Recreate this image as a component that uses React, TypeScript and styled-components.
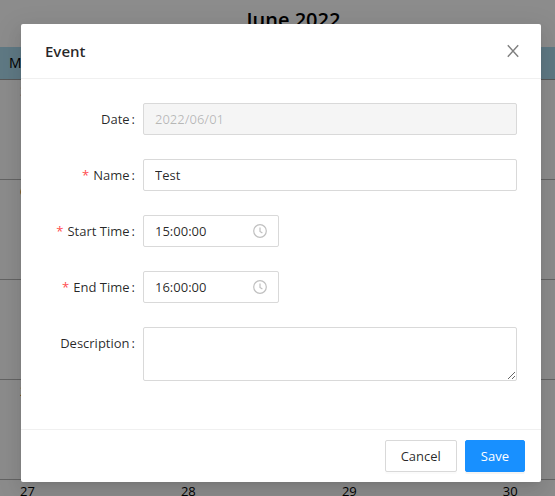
import React from 'react';
import styled, { createGlobalStyle } from 'styled-components';

const GlobalStyle = createGlobalStyle`
  *, *::before, *::after { box-sizing: border-box; }
  html, body, #root { height: 100%; }
  body {
    margin: 0;
    overflow: hidden;
    background: #fff;
    color: rgba(0, 0, 0, 0.85);
    font-family: "Open Sans", "Noto Sans", sans-serif;
    font-size: 13px;
    line-height: 22px;
  }
  button, input, textarea { font: inherit; color: inherit; }
`;

const Page = styled.div`
  position: relative;
  min-height: 100%;
`;

const Calendar = styled.main`
  position: absolute;
  inset: 0;
  overflow: hidden;
  color: #000;
`;

const MonthTitle = styled.h1`
  margin: 0;
  padding: 5px 0 12px 32px;
  font-size: 20px;
  line-height: 30px;
  font-weight: 600;
  text-align: center;
`;

const Week = styled.div`
  display: grid;
  grid-template-columns: repeat(4, 29%);
  height: 100px;
  border-bottom: 1px solid #b4b4b4;
`;

const WeekHeader = styled(Week)`
  height: 33px;
  align-items: center;
  background: #addcf0;
  border-bottom-color: #a0a0a0;
`;

const DayName = styled.div`
  padding-left: 9px;
  font-size: 14px;
`;

const Day = styled.div<{ $muted?: boolean }>`
  padding-left: 20px;
  font-size: 13px;
  color: ${(p) => (p.$muted ? '#a0a0a0' : '#000')};
`;

const Overlay = styled.div`
  position: absolute;
  inset: 0;
  padding: 24px 14px 14px 21px;
  background: rgba(0, 0, 0, 0.45);
`;

const Dialog = styled.section`
  max-width: 720px;
  margin: 0 auto;
  background: #fff;
  border-radius: 2px;
  box-shadow: 0 3px 6px -4px rgba(0, 0, 0, 0.12), 0 6px 16px 0 rgba(0, 0, 0, 0.08),
    0 9px 28px 8px rgba(0, 0, 0, 0.05);
`;

const DialogHeader = styled.header`
  display: flex;
  align-items: center;
  justify-content: space-between;
  padding: 16px 20px 16px 24px;
  border-bottom: 1px solid #f0f0f0;
`;

const DialogTitle = styled.h2`
  margin: 0;
  font-size: 15px;
  line-height: 22px;
  font-weight: 600;
`;

const CloseButton = styled.button`
  display: grid;
  place-items: center;
  width: 16px;
  height: 16px;
  padding: 0;
  border: 0;
  background: none;
  color: rgba(0, 0, 0, 0.5);
  cursor: pointer;
`;

const FormBody = styled.div`
  padding: 24px 24px 48px;
  display: grid;
  gap: 24px;
`;

const Field = styled.div`
  display: grid;
  grid-template-columns: 90px 1fr;
  column-gap: 8px;
  align-items: start;
`;

const Label = styled.label`
  text-align: right;
  white-space: nowrap;
  line-height: 32px;
  &::after {
    content: ":";
    margin-left: 2px;
  }
`;

const Required = styled.span`
  margin-right: 4px;
  color: #ff4d4f;
`;

const TextInput = styled.input`
  width: 100%;
  height: 32px;
  padding: 4px 11px;
  border: 1px solid #d9d9d9;
  border-radius: 2px;
  background: #fff;
  outline: none;
  &:disabled {
    background: #f5f5f5;
    color: rgba(0, 0, 0, 0.25);
  }
`;

const TimeBox = styled.div`
  display: flex;
  align-items: center;
  width: 136px;
  height: 32px;
  padding: 4px 11px;
  border: 1px solid #d9d9d9;
  border-radius: 2px;
  color: rgba(0, 0, 0, 0.25);
`;

const TimeInput = styled.input`
  flex: 1;
  min-width: 0;
  padding: 0;
  border: 0;
  outline: none;
  color: rgba(0, 0, 0, 0.85);
`;

const TextArea = styled.textarea`
  display: block;
  width: 100%;
  height: 54px;
  padding: 4px 11px;
  border: 1px solid #d9d9d9;
  border-radius: 2px;
  outline: none;
  resize: vertical;
`;

const DialogFooter = styled.footer`
  display: flex;
  justify-content: flex-end;
  gap: 8px;
  padding: 10px 16px;
  border-top: 1px solid #f0f0f0;
`;

const Button = styled.button<{ $primary?: boolean }>`
  height: 32px;
  padding: 0 15px;
  font-weight: ${(p) => (p.$primary ? 500 : 400)};
  border: 1px solid ${(p) => (p.$primary ? '#1890ff' : '#d9d9d9')};
  border-radius: 2px;
  background: ${(p) => (p.$primary ? '#1890ff' : '#fff')};
  color: ${(p) => (p.$primary ? '#fff' : 'rgba(0, 0, 0, 0.85)')};
  box-shadow: 0 2px 0 rgba(0, 0, 0, ${(p) => (p.$primary ? 0.045 : 0.016)});
  cursor: pointer;
`;

const CloseIcon = () => (
  <svg width="16" height="16" viewBox="0 0 16 16" fill="none" stroke="currentColor" strokeWidth="1.4" aria-hidden="true">
    <path d="M2.8 2.2 L13.2 13.8 M13.2 2.2 L2.8 13.8" />
  </svg>
);

const ClockIcon = () => (
  <svg width="14" height="14" viewBox="0 0 14 14" fill="none" stroke="currentColor" strokeWidth="1.2" aria-hidden="true">
    <circle cx="7" cy="7" r="6.3" />
    <path d="M7 3.4 V7.4 L9.4 9.1" />
  </svg>
);

const weeks = [
  ['30', '31', '1', '2'],
  ['6', '7', '8', '9'],
  ['13', '14', '15', '16'],
  ['20', '21', '22', '23'],
  ['27', '28', '29', '30'],
];

export default function App() {
  return (
    <Page>
      <GlobalStyle />
      <Calendar>
        <MonthTitle>June 2022</MonthTitle>
        <WeekHeader>
          {['Mon', 'Tue', 'Wed', 'Thu'].map((d) => (
            <DayName key={d}>{d}</DayName>
          ))}
        </WeekHeader>
        {weeks.map((week, w) => (
          <Week key={week[0]}>
            {week.map((d, i) => (
              <Day key={d} $muted={w === 0 && i < 2}>{d}</Day>
            ))}
          </Week>
        ))}
      </Calendar>
      <Overlay>
        <Dialog role="dialog" aria-labelledby="dialog-title">
          <DialogHeader>
            <DialogTitle id="dialog-title">Event</DialogTitle>
            <CloseButton type="button" aria-label="Close"><CloseIcon /></CloseButton>
          </DialogHeader>
          <FormBody>
            <Field>
              <Label htmlFor="date">Date</Label>
              <TextInput id="date" defaultValue="2022/06/01" disabled />
            </Field>
            <Field>
              <Label htmlFor="name"><Required>*</Required>Name</Label>
              <TextInput id="name" defaultValue="Test" />
            </Field>
            <Field>
              <Label htmlFor="start"><Required>*</Required>Start Time</Label>
              <TimeBox><TimeInput id="start" defaultValue="15:00:00" /><ClockIcon /></TimeBox>
            </Field>
            <Field>
              <Label htmlFor="end"><Required>*</Required>End Time</Label>
              <TimeBox><TimeInput id="end" defaultValue="16:00:00" /><ClockIcon /></TimeBox>
            </Field>
            <Field>
              <Label htmlFor="description">Description</Label>
              <TextArea id="description" />
            </Field>
          </FormBody>
          <DialogFooter>
            <Button type="button">Cancel</Button>
            <Button type="button" $primary>Save</Button>
          </DialogFooter>
        </Dialog>
      </Overlay>
    </Page>
  );
}
